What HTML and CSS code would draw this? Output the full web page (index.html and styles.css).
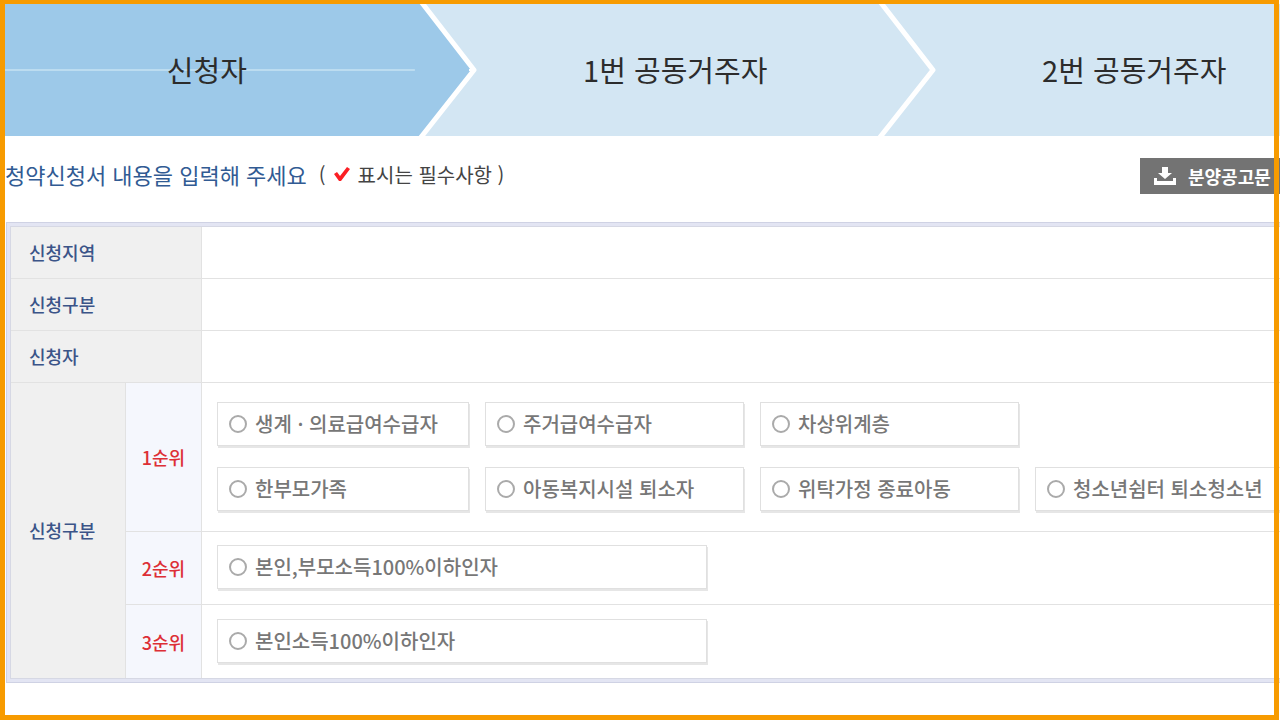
FILE: index.html
```html
<!DOCTYPE html>
<html lang="ko">

<head>
    <meta charset="UTF-8">
    <meta name="viewport" content="width=device-width, initial-scale=1.0">
    <title>청약신청서</title>
    <link rel="stylesheet" href="styles.css">
</head>

<body>
    <ol class="steps">
        <li class="step step-current">
            <span class="step-label">신청자</span>
            <svg class="chevron" viewBox="0 0 62 132" aria-hidden="true">
                <path class="chevron-fill" d="M0 0H8L59 66L7 132H0Z" />
                <path class="chevron-line" d="M4 -5L59 66L3 137" />
                <path class="chevron-tick" d="M54 66H60" />
            </svg>
        </li>
        <li class="step">
            <span class="step-label">1번 공동거주자</span>
            <svg class="chevron" viewBox="0 0 62 132" aria-hidden="true">
                <path class="chevron-line" d="M4 -5L59 66L3 137" />
            </svg>
        </li>
        <li class="step">
            <span class="step-label">2번 공동거주자</span>
            <svg class="chevron" viewBox="0 0 62 132" aria-hidden="true">
                <path class="chevron-line" d="M4 -5L59 66L3 137" />
            </svg>
        </li>
    </ol>

    <div class="title-bar">
        <h1>청약신청서 내용을 입력해 주세요</h1>
        <p class="required-note">
            <span>(</span>
            <svg class="check" width="18" height="16" viewBox="0 0 18 16" aria-hidden="true">
                <path d="M1 8L4 6L7 10L14 1L17 3L8 15H6Z" />
            </svg>
            <span>표시는 필수사항 )</span>
        </p>
        <button type="button" class="notice-button">
            <svg width="22" height="18" viewBox="0 0 22 18" aria-hidden="true">
                <path d="M8 0H14V6H18L11 12L4 6H8Z" />
                <path d="M0 11H3V14H19V11H22V18H0Z" />
            </svg>
            분양공고문
        </button>
    </div>

    <form class="table-frame">
        <table>
            <colgroup>
                <col class="col-label">
                <col class="col-rank">
                <col>
            </colgroup>
            <tr>
                <th colspan="2" scope="row">신청지역</th>
                <td></td>
            </tr>
            <tr>
                <th colspan="2" scope="row">신청구분</th>
                <td></td>
            </tr>
            <tr>
                <th colspan="2" scope="row">신청자</th>
                <td></td>
            </tr>
            <tr>
                <th rowspan="3" scope="rowgroup">신청구분</th>
                <th class="rank" scope="row">1순위</th>
                <td class="choices choices-first">
                    <div class="options">
                        <label class="option"><input type="radio" name="rank">생계 · 의료급여수급자</label>
                        <label class="option"><input type="radio" name="rank">주거급여수급자</label>
                        <label class="option"><input type="radio" name="rank">차상위계층</label>
                        <label class="option option-newline"><input type="radio" name="rank">한부모가족</label>
                        <label class="option"><input type="radio" name="rank">아동복지시설 퇴소자</label>
                        <label class="option"><input type="radio" name="rank">위탁가정 종료아동</label>
                        <label class="option"><input type="radio" name="rank">청소년쉼터 퇴소청소년</label>
                    </div>
                </td>
            </tr>
            <tr>
                <th class="rank" scope="row">2순위</th>
                <td class="choices">
                    <label class="option option-wide"><input type="radio" name="rank">본인,부모소득100%이하인자</label>
                </td>
            </tr>
            <tr>
                <th class="rank" scope="row">3순위</th>
                <td class="choices">
                    <label class="option option-wide"><input type="radio" name="rank">본인소득100%이하인자</label>
                </td>
            </tr>
        </table>
    </form>
</body>

</html>
```

FILE: styles.css
```css
* {
    box-sizing: border-box;
}

body {
    margin: 0;
    padding: 4px 0 5px 5px;
    min-height: 100vh;
    overflow: hidden;
    background: #fff;
    color: #2c2c2c;
    font-family: "Noto Sans CJK KR", sans-serif;
    font-weight: 400;
    word-break: keep-all;
}

/* orange frame that stays over the content */
body::after {
    content: "";
    position: fixed;
    inset: 0 1px 0 0;
    border: 5px solid #f79b00;
    border-top-width: 4px;
    pointer-events: none;
}

.steps {
    display: flex;
    margin: 0;
    padding: 0;
    list-style: none;
    background: #d3e6f3;
}

.step {
    display: flex;
    flex: 0 0 36%;
    height: 132px;
}

.step-label {
    display: flex;
    flex: 1;
    align-items: center;
    justify-content: center;
    padding-bottom: 2px;
    font-size: 29px;
    white-space: nowrap;
}

.step-current {
    flex-basis: 37%;
}

.step-current .step-label {
    padding-right: 6px;
    background: linear-gradient(#bcdcf0, #bcdcf0) center / 100% 2px no-repeat #9dc9e9;
}

.chevron {
    flex: none;
    width: 62px;
    height: 132px;
}

.chevron-fill {
    fill: #9dc9e9;
}

.chevron-line {
    fill: none;
    stroke: #fff;
    stroke-width: 5;
    stroke-linejoin: round;
}

.chevron-tick {
    stroke: #fff;
    stroke-width: 2;
}

.title-bar {
    display: flex;
    align-items: center;
    height: 36px;
    margin: 22px 0 28px;
    white-space: nowrap;
}

h1,
.required-note {
    padding-bottom: 4px;
}

h1 {
    margin: 0;
    color: #315b93;
    font-size: 22px;
    font-weight: 400;
}

.required-note {
    display: flex;
    align-items: center;
    gap: 7px;
    margin: 0 0 0 12px;
    color: #444;
    font-size: 20px;
}

.check {
    fill: #fb1f24;
}

.notice-button {
    display: flex;
    align-items: center;
    gap: 12px;
    width: 150px;
    height: 36px;
    margin: 0 -10px 0 auto;
    padding: 0 14px;
    border: 0;
    background: #737373;
    color: #fff;
    font-family: inherit;
    font-size: 18px;
    font-weight: 700;
    white-space: nowrap;
}

.notice-button svg {
    flex: none;
    fill: #fff;
}

.table-frame {
    width: 108%;
    margin-left: 1px;
    padding: 3px;
    border: 1px solid #cfd2e4;
    background: #e3e5f3;
}

table {
    width: 100%;
    border: 1px solid #d6d8e4;
    border-spacing: 0;
    table-layout: fixed;
    background: #fff;
}

.col-label {
    width: 115px;
}

.col-rank {
    width: 76px;
}

th,
td {
    height: 52px;
    padding: 0;
    border-bottom: 1px solid #e2e2e2;
}

th {
    padding: 0 0 2px 18px;
    border-right: 1px solid #e2e2e2;
    background: #f0f0f0;
    color: #3b5488;
    font-size: 18px;
    font-weight: 500;
    line-height: 26px;
    text-align: left;
}

.rank {
    padding: 0;
    background: #f5f7fd;
    color: #dd2f36;
    text-align: center;
}

.choices {
    padding: 13px 15px 15px;
}

.choices-first {
    padding: 19px 15px 20px;
}

tr:last-child > *,
th[rowspan] {
    border-bottom: 0;
}

tr:last-child .choices {
    padding: 14px 15px 15px;
}

.options {
    display: grid;
    grid-template-columns: 252px repeat(3, 259px);
    gap: 21px 16px;
}

.option {
    display: flex;
    align-items: center;
    gap: 8px;
    height: 44px;
    padding: 0 11px 1px;
    border: 1px solid #e0e0e0;
    box-shadow: 1px 2px 0 #e6e6e6;
    color: #777;
    font-size: 20px;
    font-weight: 500;
    white-space: nowrap;
}

.option-newline {
    grid-column-start: 1;
}

.option-wide {
    width: 490px;
}

.option input {
    appearance: none;
    flex: none;
    width: 18px;
    height: 18px;
    margin: 0;
    border: 2px solid #aaa;
    border-radius: 50%;
    background: #fff;
}

.option input:checked {
    border-width: 6px;
}
```
